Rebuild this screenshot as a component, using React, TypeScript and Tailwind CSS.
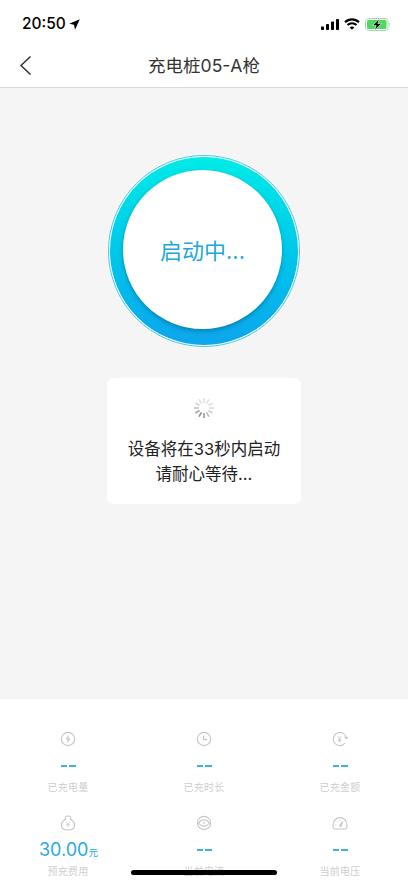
import React from 'react';

const cjk = { fontFamily: '"Inter", "Noto Sans CJK SC", sans-serif' };

const StatusBar: React.FC = () => (
  <div className="h-[44px] flex items-center justify-between pl-[22px] pr-[17px] pt-[6px] pb-[2px] bg-white">
    <div className="flex items-center gap-[3px]">
      <span className="text-[15.5px] font-medium text-black leading-none">20:50</span>
      <svg width="11" height="11" viewBox="0 0 11 11"><path d="M10.8 0.2 L0.2 4.8 L5 5.8 L6 10.8 Z" fill="#000" /></svg>
    </div>
    <div className="flex items-center gap-[5px]">
      <svg width="18" height="11" viewBox="0 0 18 11" fill="#000">
        <rect x="0" y="7.5" width="3" height="3.5" rx="0.7" />
        <rect x="5" y="5" width="3" height="6" rx="0.7" />
        <rect x="10" y="2.5" width="3" height="8.5" rx="0.7" />
        <rect x="15" y="0" width="3" height="11" rx="0.7" />
      </svg>
      <svg width="16" height="12" viewBox="0 0 16 12" fill="none" stroke="#000" strokeWidth="2.1">
        <path d="M1 4.3 C5 0.4 11 0.4 15 4.3" />
        <path d="M3.5 7 C6 4.6 10 4.6 12.5 7" />
        <path d="M8 11.8 L5.6 9.3 C7 8.1 9 8.1 10.4 9.3 Z" fill="#000" stroke="none" />
      </svg>
      <svg width="26" height="13" viewBox="0 0 26 13">
        <rect x="0.5" y="0.5" width="22.5" height="12" rx="3" fill="none" stroke="#a8d8a8" />
        <rect x="2" y="2" width="19.5" height="9" rx="1.6" fill="#4cd964" />
        <path d="M24.4 4.5 C25.6 5 25.6 8 24.4 8.5 Z" fill="#c4c4c4" />
        <path d="M14.5 0.8 L7.5 7.4 H11.2 L9.6 12.2 L16.5 5.6 H12.8 Z" fill="#000" stroke="#fff" strokeWidth="0.6" />
      </svg>
    </div>
  </div>
);

const NavBar: React.FC = () => (
  <div className="h-[44px] relative flex items-center justify-center bg-white border-b border-[#d9d9d9]">
    <svg className="absolute left-[19px] top-[11px]" width="13" height="21" viewBox="0 0 13 21" fill="none" stroke="#333" strokeWidth="1.5">
      <path d="M11.5 1.5 L2 10.5 L11.5 19.5" />
    </svg>
    <span className="text-[17.5px] text-[#333] leading-none" style={cjk}>充电桩05-A枪</span>
  </div>
);

// darkest ticks sit at the bottom left, fading round the wheel
const spinnerGreys = ['#e4e4e4', '#e4e4e4', '#e2e2e2', '#dedede', '#d2d2d2', '#bcbcbc', '#a0a0a0', '#8f8f8f', '#a8a8a8', '#c4c4c4', '#d8d8d8', '#e2e2e2'];

const Spinner: React.FC = () => (
  <svg width="22" height="22" viewBox="-11 -11 22 22">
    {spinnerGreys.map((grey, i) => (
      <line key={i} x1="0" y1="-5" x2="0" y2="-10" stroke={grey} strokeWidth="1.7" transform={`rotate(${i * 30})`} />
    ))}
  </svg>
);

const iconStroke = '#c4c6ca';

const BoltIcon = () => (
  <svg width="16" height="16" viewBox="0 0 16 16" fill="none" stroke={iconStroke} strokeWidth="1.1">
    <circle cx="8" cy="8" r="6.6" />
    <path d="M8.9 3.6 L5.5 8.6 H7.7 L7.1 12.4 L10.5 7.4 H8.3 Z" fill={iconStroke} stroke="none" />
  </svg>
);

const ClockIcon = () => (
  <svg width="16" height="16" viewBox="0 0 16 16" fill="none" stroke={iconStroke} strokeWidth="1.1">
    <circle cx="8" cy="8" r="6.6" />
    <path d="M7.6 4.5 V8.6 H11" />
  </svg>
);

const YenCycleIcon = () => (
  <svg width="16" height="16" viewBox="0 0 16 16" fill="none" stroke={iconStroke} strokeWidth="1.1">
    <path d="M14.4 7.2 A6.6 6.6 0 1 0 13 12.2" />
    <path d="M12.6 5.8 L14.4 7.6 L15.8 5.8" />
    <path d="M5.8 5 L7.6 7.6 L9.4 5 M7.6 7.6 V11 M5.8 8.4 H9.4 M5.8 9.8 H9.4" strokeWidth="0.8" />
  </svg>
);

const BagIcon = () => (
  <svg width="16" height="16" viewBox="0 0 16 16" fill="none" stroke={iconStroke} strokeWidth="1.1">
    <path d="M5.6 4.2 C4.4 2.6 5.4 1 8 1 C10.6 1 11.6 2.6 10.4 4.2 C13.2 5.6 14.8 8 14.6 10.6 C14.4 13.6 12 15 8 15 C4 15 1.6 13.6 1.4 10.6 C1.2 8 2.8 5.6 5.6 4.2 Z" />
    <path d="M6.2 7 L8 9.2 L9.8 7 M8 9.2 V12 M6.2 9.8 H9.8" strokeWidth="0.8" />
  </svg>
);

const CurrentIcon = () => (
  <svg width="16" height="16" viewBox="0 0 16 16" fill="none" stroke={iconStroke} strokeWidth="1.1">
    <circle cx="8" cy="8" r="6.6" />
    <path d="M2.5 8 C4.5 5.4 6.5 4.8 8 4.8 C9.5 4.8 11.5 5.4 13.5 8 C11.5 10.6 9.5 11.2 8 11.2 C6.5 11.2 4.5 10.6 2.5 8 Z" />
    <path d="M8.4 6 L6.6 8.2 H8 L7.6 10 L9.4 7.8 H8 Z" fill={iconStroke} stroke="none" />
  </svg>
);

const GaugeIcon = () => (
  <svg width="16" height="16" viewBox="0 0 16 16" fill="none" stroke={iconStroke} strokeWidth="1.1">
    <path d="M2.4 14 C1.2 13.4 1 11.6 1 10.4 C1 6 4 2.6 8 2.6 C12 2.6 15 6 15 10.4 C15 11.6 14.8 13.4 13.6 14 Z" />
    <path d="M7.4 11.4 L10.6 6.4 L8.8 12" />
    <path d="M3.2 10 H4.4 M4.4 6.8 L5.2 7.6 M7.8 4.8 V6" strokeWidth="0.8" />
  </svg>
);

const stats = [
  { icon: <BoltIcon />, value: '--', label: '已充电量' },
  { icon: <ClockIcon />, value: '--', label: '已充时长' },
  { icon: <YenCycleIcon />, value: '--', label: '已充金额' },
  { icon: <BagIcon />, value: '30.00', unit: '元', label: '预充费用' },
  { icon: <CurrentIcon />, value: '--', label: '当前电流' },
  { icon: <GaugeIcon />, value: '--', label: '当前电压' },
];

const StatCell: React.FC<{ icon: React.ReactNode; value: string; unit?: string; label: string }> = ({ icon, value, unit, label }) => (
  <div className="h-[84px] flex flex-col items-center">
    <div className="h-[16px] flex items-center justify-center">{icon}</div>
    <div className="h-[28px] mt-[5px] flex items-center justify-center text-[#29abe2]">
      {value === '--' ? (
        <div className="flex gap-[2px]">
          <div className="w-[6.5px] h-[2px] bg-[#3fb1e8]" />
          <div className="w-[6.5px] h-[2px] bg-[#3fb1e8]" />
        </div>
      ) : (
        <div className="flex items-baseline ml-[1px]" style={cjk}>
          <span className="text-[18px] font-normal leading-none">{value}</span>
          <span className="text-[9.5px] leading-none">{unit}</span>
        </div>
      )}
    </div>
    <span className="text-[10px] leading-[14px] tracking-[0.2px] text-[#cdcfd3]" style={cjk}>{label}</span>
  </div>
);

export default function App() {
  return (
    <div className="w-[408px] h-[883px] relative overflow-hidden flex flex-col bg-[#f5f5f5]" style={cjk}>
      <StatusBar />
      <NavBar />

      <div className="flex-1 flex flex-col items-center pt-[67px]">
        <div className="w-[192px] h-[192px] rounded-full border border-[#3fcdea] bg-white flex items-center justify-center">
          <div className="w-[188px] h-[188px] rounded-full bg-gradient-to-b from-[#00ebe6] to-[#0ea5ec] flex items-center justify-center">
            <div className="w-[159px] h-[159px] mb-[3px] mr-[3px] rounded-full bg-white shadow-[0_2px_4px_rgba(0,60,100,0.4)] flex items-center justify-center">
              <span className="text-[22px] text-[#23a6dc] leading-none mt-[3px]">启动中...</span>
            </div>
          </div>
        </div>

        <div className="mt-[31px] w-[194px] h-[126px] rounded-[6px] bg-white flex flex-col items-center pt-[19px]">
          <Spinner />
          <div className="mt-[18px] text-[16.5px] leading-[25px] text-[#222] text-center">
            <p>设备将在33秒内启动</p>
            <p>请耐心等待...</p>
          </div>
        </div>
      </div>

      <div className="h-[184px] bg-white grid grid-cols-3 pt-[32px] shrink-0">
        {stats.map(s => (
          <StatCell key={s.label} {...s} />
        ))}
      </div>

      <div className="absolute left-[131px] bottom-[8px] w-[146px] h-[5px] rounded-full bg-black" />
    </div>
  );
}
